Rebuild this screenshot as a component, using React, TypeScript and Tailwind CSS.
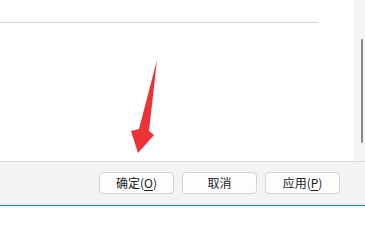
import React from "react";

const font = { fontFamily: '"Noto Sans CJK SC", "Microsoft YaHei", sans-serif' };

function DlgButton({ label, hotkey }: { label: string; hotkey?: string }) {
  return (
    <button className="w-[75px] h-[22px] flex items-center justify-center rounded-[4px] border border-[#d3d3d3] bg-[#fdfdfd] text-[12px] leading-none text-[#1b1b1b]">
      {label}
      {hotkey && (
        <>
          (<span className="underline underline-offset-2">{hotkey}</span>)
        </>
      )}
    </button>
  );
}

export default function App() {
  return (
    <div className="relative w-[365px] h-[208px] flex flex-col bg-white overflow-hidden" style={font}>
      {/* zone de contenu + barre de défilement */}
      <div className="flex h-[161px]">
        <div className="flex-1 pt-[22px]">
          <div className="h-px w-[318px] bg-[#d4d4d4]" />
        </div>
        <div className="w-[11px] bg-[#f4f4f4] pt-[39px] pl-[7px]">
          <div className="w-[2px] h-[104px] rounded-full bg-[#8c8c8c]" />
        </div>
      </div>

      {/* barre des boutons */}
      <div className="flex-1 border-t border-[#dcdcdc] bg-[#f3f3f3] flex justify-end items-start gap-[8px] pt-[10px] pr-[25px]">
        <DlgButton label="确定" hotkey="O" />
        <DlgButton label="取消" />
        <DlgButton label="应用" hotkey="P" />
      </div>
      <div className="h-[2px] bg-[#e4eef4]" />
      <div className="h-px bg-[#3d7895]" />
      <div className="h-[2px] bg-[#eef3f6]" />

      {/* flèche rouge d'annotation */}
      <svg className="absolute left-0 top-0 pointer-events-none" width="365" height="208" viewBox="0 0 365 208">
        <polygon
          points="157,60 149,131 154,135 138,153 131,131 139,129"
          fill="#ec3237"
        />
      </svg>
    </div>
  );
}
